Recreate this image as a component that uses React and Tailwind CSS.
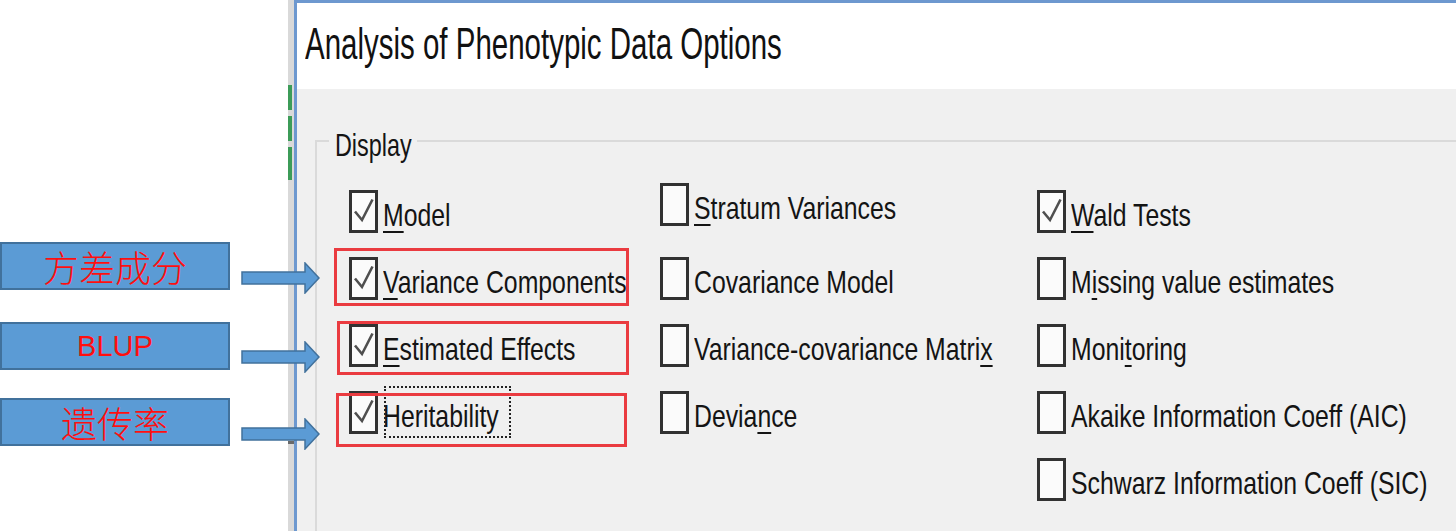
import React from 'react';

const col1 = [
  { text: 'Model', u: 0, checked: true },
  { text: 'Variance Components', u: 0, checked: true, red: 'left-[-15px] top-[-9px] w-[295px] h-[58px]' },
  { text: 'Estimated Effects', u: 0, checked: true, red: 'left-[-12px] top-[-3px] w-[292px] h-[54px]' },
  { text: 'Heritability', u: -1, checked: true, red: 'left-[-13px] top-[2px] w-[291px] h-[54px]', focus: true },
];

const col2 = [
  { text: 'Stratum Variances', u: 0 },
  { text: 'Covariance Model', u: -1 },
  { text: 'Variance-covariance Matrix', u: 25 },
  { text: 'Deviance', u: 5 },
];

const col3 = [
  { text: 'Wald Tests', u: 0, checked: true },
  { text: 'Missing value estimates', u: 1 },
  { text: 'Monitoring', u: 4 },
  { text: 'Akaike Information Coeff (AIC)', u: -1 },
  { text: 'Schwarz Information Coeff (SIC)', u: -1, cover: true },
];

const Check = ({ checked }) => (
  <span className="w-[29px] h-[43px] shrink-0 border-[3px] border-[#323232] bg-[#fbfbfb] flex items-center justify-center">
    {checked && (
      <svg viewBox="0 0 23 37" className="w-[23px] h-[37px]">
        <path d="M3 18.5 L10 27 L20.5 6.5" fill="none" stroke="#4f4f4f" strokeWidth="2.6" />
      </svg>
    )}
  </span>
);

const Label = ({ text, u }) => (
  <span className="inline-block origin-left scale-x-[0.775] whitespace-nowrap text-[32px] leading-none text-[#141414]">
    {u >= 0 ? (
      <>
        {text.slice(0, u)}
        <span className="underline decoration-2 underline-offset-[5px]">{text[u]}</span>
        {text.slice(u + 1)}
      </>
    ) : (
      text
    )}
  </span>
);

const Row = ({ item, className = '' }) => (
  <div className={`relative flex h-[67px] items-start gap-[5px] ${className}`}>
    <Check checked={item.checked} />
    <div className="h-[43px] flex items-center pt-[6px]">
      <Label text={item.text} u={item.u} />
    </div>
    {item.focus && (
      <div className="absolute left-[35px] top-[-5px] w-[127px] h-[52px] border-2 border-dotted border-[#222]" />
    )}
    {item.red && <div className={`absolute border-[3px] border-[#ea3b40] ${item.red}`} />}
    {/* the control's own background hides the group border where the text runs over it */}
    {item.cover && <div className="absolute left-[398px] top-[-3px] w-[12px] h-[22px] bg-[#f0f0f0]" />}
  </div>
);

const Tag = ({ children, className = '' }) => (
  <div className={`w-[230px] h-[48px] border-2 border-[#41719c] bg-[#5b9bd5] flex items-center justify-center text-[#ff0f0f] ${className}`}>
    {children}
  </div>
);

const Arrow = ({ className }) => (
  <svg viewBox="0 0 79 32" className={`absolute left-[241px] w-[79px] h-[32px] z-10 ${className}`}>
    <path d="M1 10 H64 V1 L78 16 L64 31 V22 H1 Z" fill="#5b9bd5" stroke="#41719c" strokeWidth="1.5" />
  </svg>
);

export default function App() {
  return (
    <div className="relative flex w-[1456px] h-[531px] overflow-hidden bg-white font-['Liberation_Sans',Arial,sans-serif]">
      {/* annotation labels */}
      <div className="w-[288px] shrink-0 pt-[242px] flex flex-col">
        <Tag className="font-['Noto_Sans_CJK_SC',sans-serif] font-light text-[36px] leading-none">方差成分</Tag>
        <Tag className="mt-[32px] text-[29px] leading-none">BLUP</Tag>
        <Tag className="mt-[28px] font-['Noto_Sans_CJK_SC',sans-serif] font-light text-[36px] leading-none">遗传率</Tag>
      </div>

      {/* window behind */}
      <div className="w-[6px] shrink-0 bg-[#d9d9d9] flex flex-col pt-[85px] gap-[6px]">
        <div className="w-[4px] h-[25px] bg-[#3c9c58]" />
        <div className="w-[4px] h-[25px] bg-[#3c9c58]" />
        <div className="w-[4px] h-[33px] bg-[#3c9c58]" />
        <div className="w-[6px] h-[3px] mt-[255px] bg-[#6a6a6a]" />
      </div>

      {/* dialog */}
      <div className="flex-1 flex flex-col border-l-[3px] border-t-[3px] border-[#6d98cf]">
        <div className="h-[86px] shrink-0 bg-white flex items-start justify-between pl-[8px] pr-[20px] pt-[19px]">
          <span className="inline-block origin-left scale-x-[0.67] whitespace-nowrap text-[44px] leading-none text-[#111]">
            Analysis of Phenotypic Data Options
          </span>
          <svg viewBox="0 0 25 37" className="w-[25px] h-[37px] mt-[5px]">
            <path d="M1 1 L24 36 M24 1 L1 36" stroke="#111" strokeWidth="2" fill="none" />
          </svg>
        </div>

        <div className="flex-1 bg-[#f0f0f0] pl-[18px] pr-[14px] pt-[51px]">
          <div className="relative h-[420px] border-2 border-[#dadada] pl-[32px] pt-[48px] flex">
            <div className="absolute top-[-13px] left-[12px] w-[88px] px-[6px] bg-[#f0f0f0]">
              <span className="inline-block origin-left scale-x-[0.73] whitespace-nowrap text-[32px] leading-none text-[#141414]">
                Display
              </span>
            </div>

            <div className="w-[311px] shrink-0 flex flex-col">
              {col1.map((it) => (
                <Row key={it.text} item={it} />
              ))}
            </div>
            <div className="w-[377px] shrink-0 flex flex-col">
              {col2.map((it, i) => (
                <Row key={it.text} item={it} className={i === 0 ? '-mt-[7px] mb-[7px]' : ''} />
              ))}
            </div>
            <div className="flex-1 flex flex-col">
              {col3.map((it) => (
                <Row key={it.text} item={it} />
              ))}
            </div>
          </div>
        </div>
      </div>

      <Arrow className="top-[262px]" />
      <Arrow className="top-[341px]" />
      <Arrow className="top-[418px]" />
    </div>
  );
}
